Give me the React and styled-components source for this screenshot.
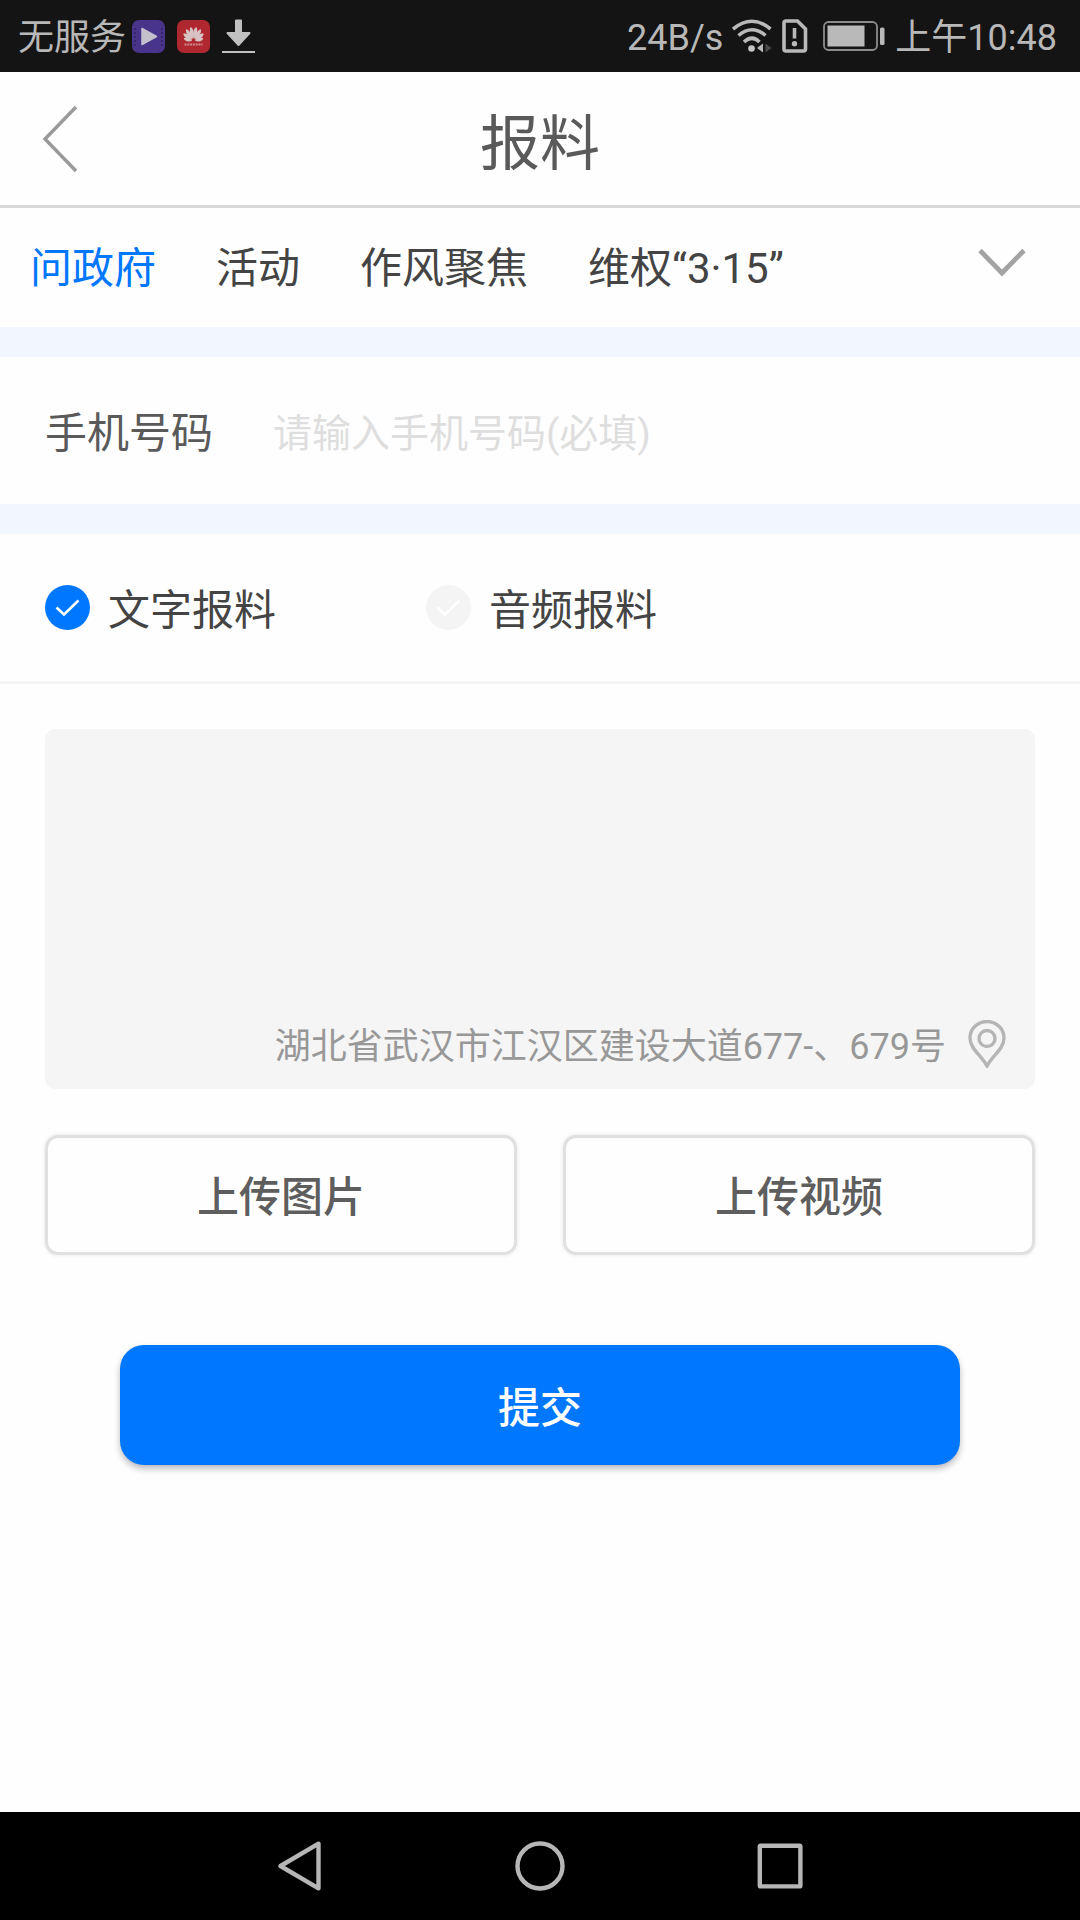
import { useState } from "react";
import styled, { createGlobalStyle } from "styled-components";

const tabs = ["问政府", "活动", "作风聚焦", "维权“3·15”"];
const types = ["文字报料", "音频报料"];

// [rotation, length] of each petal in the flower icon
const petals = [
  [-76, 0.72],
  [-54, 0.9],
  [-32, 1],
  [-11, 1.02],
  [11, 1.02],
  [32, 1],
  [54, 0.9],
  [76, 0.72],
];

const App = () => {
  const [activeTab, setActiveTab] = useState(0);
  const [type, setType] = useState(0);

  return (
    <>
      <GlobalStyle />
      <Page>
        <StatusBar />
        <Header>
          <BackIcon viewBox="0 0 40 70">
            <path d="M35 3 4 35l31 32" />
          </BackIcon>
          <h1>报料</h1>
        </Header>
        <Tabs>
          {tabs.map((tab, index) => (
            <Tab
              key={tab}
              $active={index === activeTab}
              onClick={() => setActiveTab(index)}
            >
              {tab}
            </Tab>
          ))}
          <MoreIcon viewBox="0 0 48 30">
            <path d="M2 2.5 24 25 46 2.5" />
          </MoreIcon>
        </Tabs>
        <Divider />
        <PhoneRow>
          <span>手机号码</span>
          <input type="tel" placeholder="请输入手机号码(必填)" />
        </PhoneRow>
        <Divider />
        <TypeRow>
          {types.map((label, index) => (
            <TypeOption key={label} onClick={() => setType(index)}>
              <Check $checked={index === type} viewBox="0 0 45 45">
                <circle cx="22.5" cy="22.5" r="22.5" />
                <path d="M11.5 22.5 19 29.5 33.5 15.5" />
              </Check>
              <span>{label}</span>
            </TypeOption>
          ))}
        </TypeRow>
        <Form>
          <TextBox>
            <span>湖北省武汉市江汉区建设大道677-、679号</span>
            <PinIcon viewBox="0 0 38 48">
              <path d="M19 46C14 36 2 29 2 18a17 16.5 0 0 1 34 0c0 11-12 18-17 28Z" />
              <circle cx="19" cy="18.5" r="8" />
            </PinIcon>
          </TextBox>
          <Uploads>
            <UploadButton>上传图片</UploadButton>
            <UploadButton>上传视频</UploadButton>
          </Uploads>
          <SubmitButton>提交</SubmitButton>
        </Form>
        <NavBar>
          <svg viewBox="0 0 50 50">
            <path d="M5.5 25 43.5 2.7 43.5 47.3Z" />
          </svg>
          <svg viewBox="0 0 50 50">
            <circle cx="25" cy="25" r="22.5" />
          </svg>
          <svg viewBox="0 0 50 50">
            <rect x="4.8" y="4.8" width="40.6" height="40.6" rx="1" />
          </svg>
        </NavBar>
      </Page>
    </>
  );
};

const StatusBar = () => (
  <Status>
    <StatusText>无服务</StatusText>
    <LeftIcons>
      <svg width="33" height="33" viewBox="0 0 33 33">
        <rect width="33" height="33" rx="7" fill="#49348c" />
        <path
          d="M3 8v18M30 8v18"
          stroke="#2f2463"
          strokeWidth="1.5"
          strokeDasharray="2 2"
        />
        <path
          d="M10 8.5v16L24.5 16.5Z"
          fill="#c4c0cc"
          stroke="#c4c0cc"
          strokeWidth="1.5"
          strokeLinejoin="round"
        />
      </svg>
      <svg width="33" height="33" viewBox="0 0 33 33">
        <rect width="33" height="33" rx="7" fill="#b0282f" />
        <g fill="#d8c4c4">
          {petals.map(([angle, length]) => (
            <path
              key={angle}
              d="M0-2C-3.2-7-2.6-12 0-14 2.6-12 3.2-7 0-2Z"
              transform={`translate(16.5 21) rotate(${angle}) scale(.85 ${length})`}
            />
          ))}
        </g>
        <path
          d="M7.5 24.5h18"
          stroke="#cf8c8f"
          strokeWidth="2"
          strokeDasharray="2 .8"
        />
      </svg>
      <svg width="33" height="35" viewBox="0 0 33 35">
        <path
          d="M14 1.5h5V14h8.5L16.5 26 5.5 14H14Z"
          fill="#c0c0c0"
          stroke="#c0c0c0"
          strokeWidth="2"
          strokeLinejoin="round"
        />
        <path d="M0 33h33" stroke="#c0c0c0" strokeWidth="2.2" />
      </svg>
    </LeftIcons>
    <Speed>24B/s</Speed>
    <RightIcons>
      <svg width="40" height="34" viewBox="0 0 40 34">
        <g fill="none" stroke="#b9b9b9" strokeWidth="3.6">
          <path d="M1 10Q20-5.5 38.5 10" />
          <path d="M6.5 16.5Q20 5 33.5 16.5" />
          <path d="M12 23Q20 15.5 27.5 23" />
        </g>
        <circle cx="19.5" cy="29.5" r="3.3" fill="#c4c4c4" />
        <path d="M31 24.5v9l-6-4.5Z" fill="#b9b9b9" />
        <path d="M33.5 24.5v9l6-4.5Z" fill="#4a4a4a" />
      </svg>
      <svg width="26" height="34" viewBox="0 0 26 34">
        <path
          d="M4 2h11.5L23.5 10v20a2 2 0 0 1-2 2H4a2 2 0 0 1-2-2V4a2 2 0 0 1 2-2Z"
          fill="none"
          stroke="#b9b9b9"
          strokeWidth="3.6"
        />
        <path d="M12.5 9v10.5" stroke="#b9b9b9" strokeWidth="3.6" />
        <circle cx="12.5" cy="24.8" r="2.7" fill="#b9b9b9" />
      </svg>
      <svg width="62" height="30" viewBox="0 0 62 30">
        <rect
          x="1"
          y="1"
          width="53"
          height="28"
          rx="4.5"
          fill="none"
          stroke="#8c8c8c"
          strokeWidth="1.8"
        />
        <rect x="4.5" y="4.5" width="37" height="21" fill="#b9b9b9" />
        <rect x="57" y="6.5" width="4.5" height="17.5" rx="1.5" fill="#b9b9b9" />
      </svg>
    </RightIcons>
    <StatusText>上午10:48</StatusText>
  </Status>
);

const GlobalStyle = createGlobalStyle`
  * {
    box-sizing: border-box;
  }
  body {
    margin: 0;
    background: #fefefe;
    font-family: Roboto, "Noto Sans CJK SC", sans-serif;
  }
  button,
  input {
    font-family: inherit;
    padding: 0;
    border: none;
    background: none;
  }
`;

const Page = styled.main`
  display: flex;
  flex-direction: column;
  width: 1080px;
  height: 1920px;
  overflow: hidden;
`;

const Status = styled.div`
  display: flex;
  align-items: center;
  flex-shrink: 0;
  height: 72px;
  padding: 0 23px 0 18px;
  background: #141414;
`;

const StatusText = styled.span`
  padding-top: 4px;
  color: #b8b8b8;
  font-size: 36px;
  line-height: 72px;
  white-space: nowrap;
`;

const Speed = styled(StatusText)`
  margin-left: auto;
`;

const LeftIcons = styled.div`
  display: flex;
  align-items: center;
  gap: 12px;
  margin-left: 6px;
`;

const RightIcons = styled.div`
  display: flex;
  align-items: center;
  margin: 0 10px 0 9px;
  svg:nth-child(2) {
    margin: 0 15px 0 10px;
  }
`;

const Header = styled.header`
  display: grid;
  grid-template-columns: 1fr auto 1fr;
  align-items: center;
  flex-shrink: 0;
  height: 136px;
  padding: 0 41px;
  border-bottom: 3px solid #d8d8d8;
  h1 {
    margin: 0;
    padding-top: 12px;
    color: #5a5a5a;
    font-size: 60px;
    font-weight: 400;
    line-height: 121px;
  }
`;

const BackIcon = styled.svg`
  width: 40px;
  height: 70px;
  fill: none;
  stroke: #999;
  stroke-width: 3.4;
`;

const Tabs = styled.nav`
  display: flex;
  align-items: center;
  flex-shrink: 0;
  gap: 60px;
  height: 119px;
  padding: 0 54px 0 30px;
`;

const Tab = styled.button`
  padding-top: 2px;
  color: ${({ $active }) => ($active ? "#0077ff" : "#444")};
  font-size: 42px;
  line-height: 117px;
  white-space: nowrap;
  cursor: pointer;
`;

const MoreIcon = styled.svg`
  width: 48px;
  height: 30px;
  margin: 0 0 9px auto;
  fill: none;
  stroke: #a3a3a3;
  stroke-width: 4.8;
`;

const Divider = styled.div`
  flex-shrink: 0;
  height: 30px;
  background: #f2f6fe;
`;

const PhoneRow = styled.label`
  display: flex;
  align-items: center;
  flex-shrink: 0;
  gap: 60px;
  height: 147px;
  padding: 7px 45px 0;
  span {
    color: #5a5a5a;
    font-size: 42px;
    line-height: 140px;
  }
  input {
    flex: 1;
    height: 100px;
    font-size: 39px;
    outline: none;
  }
  input::placeholder {
    color: #dedede;
  }
`;

const TypeRow = styled.div`
  display: flex;
  align-items: center;
  flex-shrink: 0;
  gap: 149px;
  height: 150px;
  padding: 0 45px;
  border-bottom: 3px solid #f5f5f5;
`;

const TypeOption = styled.button`
  display: flex;
  align-items: center;
  gap: 18px;
  color: #444;
  font-size: 42px;
  line-height: 140px;
  cursor: pointer;
  &:first-child {
    margin-right: 1px;
  }
  span {
    padding-top: 6px;
  }
`;

const Check = styled.svg`
  width: 45px;
  height: 45px;
  circle {
    fill: ${({ $checked }) => ($checked ? "#0077ff" : "#f4f4f4")};
  }
  path {
    fill: none;
    stroke: #fff;
    stroke-width: 2.6;
  }
`;

const Form = styled.section`
  display: flex;
  flex-direction: column;
  flex: 1;
  padding: 45px 45px 0;
`;

const TextBox = styled.div`
  display: flex;
  align-items: flex-end;
  justify-content: flex-end;
  height: 360px;
  padding: 0 29px 21px;
  border-radius: 11px;
  background: #f5f5f5;
  color: #989898;
  font-size: 36px;
  line-height: 42px;
`;

const PinIcon = styled.svg`
  width: 38px;
  height: 48px;
  margin-left: 22px;
  fill: none;
  stroke: #b5b5b5;
  stroke-width: 3.4;
`;

const Uploads = styled.div`
  display: grid;
  grid-template-columns: 1fr 1fr;
  gap: 46px;
  margin-top: 46px;
`;

const UploadButton = styled.button`
  height: 120px;
  padding-top: 5px;
  border: 3px solid #e0e0e0;
  border-radius: 13px;
  box-shadow: 0 0 4px rgba(0, 0, 0, 0.1);
  color: #5e5e5e;
  font-size: 42px;
  font-weight: 500;
  line-height: 109px;
`;

const SubmitButton = styled.button`
  height: 120px;
  margin: 90px 75px 0;
  padding-bottom: 2px;
  border-radius: 24px;
  background: #0077ff;
  box-shadow: 0 4px 6px rgba(20, 20, 40, 0.28);
  color: #fff;
  font-size: 42px;
  font-weight: 500;
`;

const NavBar = styled.footer`
  display: flex;
  align-items: center;
  justify-content: center;
  flex-shrink: 0;
  gap: 190px;
  height: 108px;
  background: #000;
  svg {
    width: 50px;
    height: 50px;
    fill: none;
    stroke: #b6b6b6;
    stroke-width: 4.4;
    stroke-linejoin: round;
  }
`;

export default App;
